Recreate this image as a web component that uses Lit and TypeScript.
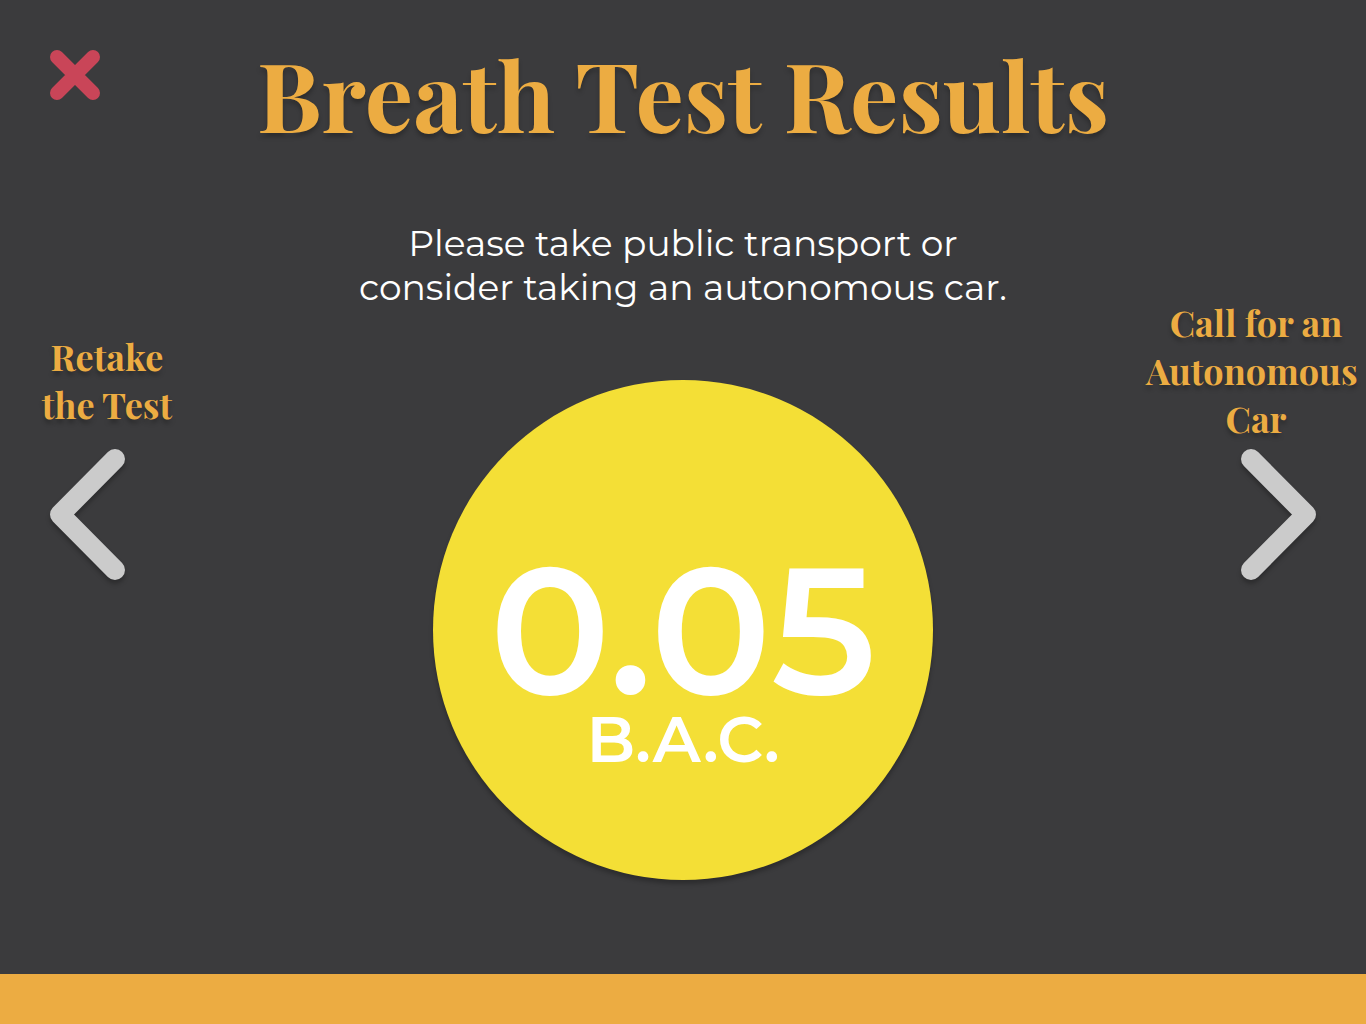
import { LitElement, css, html, svg } from "lit";
import { customElement, property } from "lit/decorators.js";

@customElement("nav-arrow")
class NavArrow extends LitElement {
  @property() direction: "back" | "forward" = "back";
  @property({ attribute: false }) lines: string[] = [];

  static styles = css`
    :host {
      display: block;
    }
    .nav {
      display: flex;
      flex-direction: column;
      width: 100%;
      margin: 0;
      padding: 0;
      border: 0;
      background: none;
      color: #ecac42;
      font: 700 36px/48px "Playfair Display", "Liberation Serif", serif;
      text-align: center;
      text-shadow: 0 4px 4px rgba(0, 0, 0, 0.25);
      cursor: pointer;
    }
    .back {
      gap: 21px;
    }
    .forward {
      gap: 7px;
    }
    .line {
      display: block;
      white-space: pre;
    }
    .label {
      align-self: center;
    }
    .icon {
      display: block;
      width: 75px;
      height: 131px;
      margin: 0 50px;
      overflow: visible;
      filter: drop-shadow(0 4px 2px rgba(0, 0, 0, 0.25));
    }
    .back .icon {
      align-self: flex-start;
    }
    .forward .icon {
      align-self: flex-end;
    }
    .stroke {
      fill: none;
      stroke: #cbcbcb;
      stroke-width: 20;
      stroke-linecap: round;
      stroke-linejoin: round;
    }
  `;

  render() {
    const shape =
      this.direction === "back"
        ? svg`<path class="stroke" d="M65 10 10 65.5 65 121" />`
        : svg`<path class="stroke" d="M10 10 65 65.5 10 121" />`;
    return html`
      <button class="nav ${this.direction}" type="button">
        <span class="label">
          ${this.lines.map((line) => html`<span class="line">${line}</span> `)}
        </span>
        <svg class="icon" viewBox="0 0 75 131" aria-hidden="true">${shape}</svg>
      </button>
    `;
  }
}

@customElement("app-root")
class AppRoot extends LitElement {
  static styles = css`
    :host {
      display: block;
    }
    .page {
      display: grid;
      grid-template-rows: auto 1fr 50px;
      min-height: 100vh;
      background: #3b3b3d;
      color: #ffffff;
      font-family: Montserrat, Inter, sans-serif;
    }
    .header,
    .main {
      display: grid;
      grid-template-columns: 220px 1fr 220px;
      align-items: start;
    }
    .header {
      padding-top: 29px;
    }
    .close {
      width: 50px;
      height: 50px;
      margin: 21px 0 0 50px;
      padding: 0;
      border: 0;
      background: none;
      cursor: pointer;
    }
    .cross {
      display: block;
      width: 50px;
      height: 50px;
      fill: none;
      stroke: #c94558;
      stroke-width: 14;
      stroke-linecap: round;
    }
    .title {
      margin: 0;
      color: #ecac42;
      font: 700 96px/128px "Playfair Display", "Liberation Serif", serif;
      text-align: center;
      text-shadow: 0 4px 4px rgba(0, 0, 0, 0.25);
      white-space: nowrap;
    }
    .main {
      padding: 64px 0 94px;
    }
    .retake {
      padding: 111px 6px 0 0;
    }
    .call {
      padding-top: 77px;
    }
    .result {
      display: flex;
      flex-direction: column;
      align-items: center;
      gap: 71px;
    }
    .advice {
      margin: 0;
      font-size: 36px;
      font-weight: 400;
      line-height: 44px;
      text-align: center;
    }
    .line {
      display: block;
      white-space: nowrap;
    }
    .dial {
      display: flex;
      flex-direction: column;
      align-items: center;
      justify-content: center;
      box-sizing: border-box;
      width: 500px;
      aspect-ratio: 1;
      padding-top: 78px;
      border-radius: 50%;
      background: #f4df36;
      box-shadow: 0 4px 4px rgba(0, 0, 0, 0.25);
      font-weight: 600;
    }
    .value {
      font-size: 180px;
      line-height: 140px;
    }
    .unit {
      font-size: 64px;
      line-height: 78px;
    }
    .footer {
      background: #ecac42;
    }
  `;

  render() {
    return html`
      <div class="page">
        <header class="header">
          <button class="close" type="button" aria-label="Close">
            <svg class="cross" viewBox="0 0 50 50" aria-hidden="true">
              <path d="M7 7 43 43M43 7 7 43" />
            </svg>
          </button>
          <h1 class="title">Breath Test Results</h1>
        </header>
        <main class="main">
          <nav-arrow
            class="retake"
            direction="back"
            .lines=${["Retake", "the Test"]}
          ></nav-arrow>
          <section class="result">
            <p class="advice">
              <span class="line">Please take public transport or</span>
              <span class="line">consider taking an autonomous car.</span>
            </p>
            <div class="dial">
              <span class="value">0.05</span>
              <span class="unit">B.A.C.</span>
            </div>
          </section>
          <nav-arrow
            class="call"
            direction="forward"
            .lines=${["Call for an", "Autonomous ", "Car"]}
          ></nav-arrow>
        </main>
        <footer class="footer"></footer>
      </div>
    `;
  }
}
